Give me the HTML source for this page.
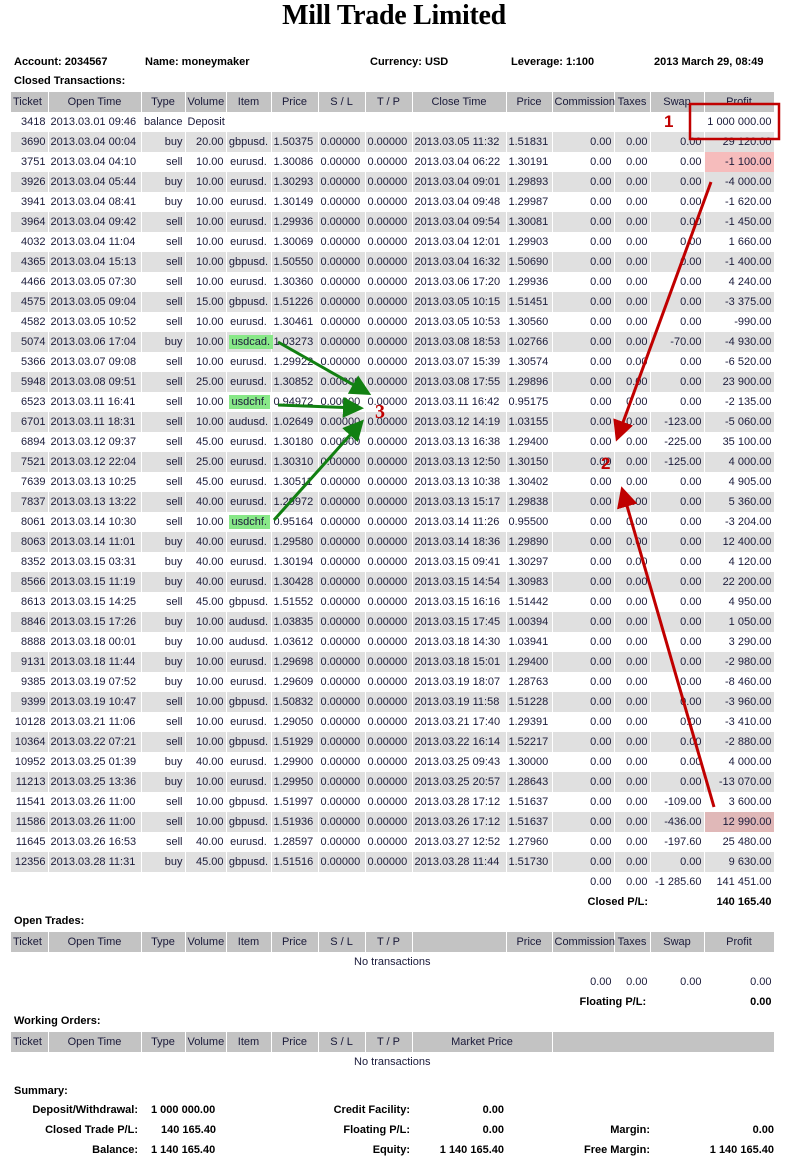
<!DOCTYPE html>
<html><head><meta charset="utf-8"><style>
body{margin:0;background:#fff;width:788px;height:1161px;position:relative;font-family:"Liberation Sans",sans-serif;font-size:11px;color:#1a1a3a;overflow:hidden}
.t{position:absolute;left:0;top:0;width:788px;text-align:center;font-family:"Liberation Serif",serif;font-weight:bold;font-size:28px;line-height:31px;color:#000;letter-spacing:-0.3px}
.a{position:absolute;font-weight:bold;font-size:11px;color:#000;white-space:nowrap}
table{position:absolute;left:11px;width:763px;table-layout:fixed;border-collapse:collapse}
td{height:20px;padding:0 2px;border-right:1px solid #fff;white-space:nowrap;overflow:visible;box-sizing:border-box;line-height:20px}
tr.h td{background:#c3c3c3;text-align:center;color:#1a1a3a}
tr.g td{background:#e0e0e0}
.m td:nth-child(1),.m td:nth-child(3),.m td:nth-child(4),.m td:nth-child(11),.m td:nth-child(12),.m td:nth-child(13),.m td:nth-child(14){text-align:right}
.m td:nth-child(5){text-align:center}
.gr{background:#88e888;padding:1px 3px}
.pk{background:#f6bcbc!important}
.pk2{background:#e0b8b8!important}
.r{text-align:right}.c{text-align:center}.b{font-weight:bold;color:#000}
</style></head><body>
<div class="t">Mill Trade Limited</div>
<div class="a" style="left:14px;top:56px">Account: 2034567</div>
<div class="a" style="left:145px;top:56px">Name: moneymaker</div>
<div class="a" style="left:370px;top:56px">Currency: USD</div>
<div class="a" style="left:511px;top:56px">Leverage: 1:100</div>
<div class="a" style="left:654px;top:56px">2013 March 29, 08:49</div>
<div class="a" style="left:14px;top:75px">Closed Transactions:</div>
<table class="m" style="top:92px">
<colgroup><col style="width:37px"><col style="width:93px"><col style="width:44px"><col style="width:41px"><col style="width:45px"><col style="width:47px"><col style="width:47px"><col style="width:47px"><col style="width:94px"><col style="width:46px"><col style="width:62px"><col style="width:36px"><col style="width:54px"><col style="width:70px"></colgroup>
<tr class="h"><td style="text-align:left">Ticket</td><td style="text-align:center">Open Time</td><td style="text-align:center">Type</td><td style="text-align:center">Volume</td><td>Item</td><td style="text-align:center">Price</td><td>S / L</td><td>T / P</td><td>Close Time</td><td>Price</td><td style="text-align:center">Commission</td><td style="text-align:center">Taxes</td><td style="text-align:center">Swap</td><td style="text-align:center">Profit</td></tr>
<tr><td>3418</td><td>2013.03.01 09:46</td><td>balance</td><td style="text-align:left">Deposit</td><td></td><td></td><td></td><td></td><td></td><td></td><td></td><td></td><td></td><td>1 000 000.00</td></tr>
<tr class="g"><td>3690</td><td>2013.03.04 00:04</td><td>buy</td><td>20.00</td><td>gbpusd.</td><td>1.50375</td><td>0.00000</td><td>0.00000</td><td>2013.03.05 11:32</td><td>1.51831</td><td>0.00</td><td>0.00</td><td>0.00</td><td>29 120.00</td></tr>
<tr><td>3751</td><td>2013.03.04 04:10</td><td>sell</td><td>10.00</td><td>eurusd.</td><td>1.30086</td><td>0.00000</td><td>0.00000</td><td>2013.03.04 06:22</td><td>1.30191</td><td>0.00</td><td>0.00</td><td>0.00</td><td class="pk">-1 100.00</td></tr>
<tr class="g"><td>3926</td><td>2013.03.04 05:44</td><td>buy</td><td>10.00</td><td>eurusd.</td><td>1.30293</td><td>0.00000</td><td>0.00000</td><td>2013.03.04 09:01</td><td>1.29893</td><td>0.00</td><td>0.00</td><td>0.00</td><td>-4 000.00</td></tr>
<tr><td>3941</td><td>2013.03.04 08:41</td><td>buy</td><td>10.00</td><td>eurusd.</td><td>1.30149</td><td>0.00000</td><td>0.00000</td><td>2013.03.04 09:48</td><td>1.29987</td><td>0.00</td><td>0.00</td><td>0.00</td><td>-1 620.00</td></tr>
<tr class="g"><td>3964</td><td>2013.03.04 09:42</td><td>sell</td><td>10.00</td><td>eurusd.</td><td>1.29936</td><td>0.00000</td><td>0.00000</td><td>2013.03.04 09:54</td><td>1.30081</td><td>0.00</td><td>0.00</td><td>0.00</td><td>-1 450.00</td></tr>
<tr><td>4032</td><td>2013.03.04 11:04</td><td>sell</td><td>10.00</td><td>eurusd.</td><td>1.30069</td><td>0.00000</td><td>0.00000</td><td>2013.03.04 12:01</td><td>1.29903</td><td>0.00</td><td>0.00</td><td>0.00</td><td>1 660.00</td></tr>
<tr class="g"><td>4365</td><td>2013.03.04 15:13</td><td>sell</td><td>10.00</td><td>gbpusd.</td><td>1.50550</td><td>0.00000</td><td>0.00000</td><td>2013.03.04 16:32</td><td>1.50690</td><td>0.00</td><td>0.00</td><td>0.00</td><td>-1 400.00</td></tr>
<tr><td>4466</td><td>2013.03.05 07:30</td><td>sell</td><td>10.00</td><td>eurusd.</td><td>1.30360</td><td>0.00000</td><td>0.00000</td><td>2013.03.06 17:20</td><td>1.29936</td><td>0.00</td><td>0.00</td><td>0.00</td><td>4 240.00</td></tr>
<tr class="g"><td>4575</td><td>2013.03.05 09:04</td><td>sell</td><td>15.00</td><td>gbpusd.</td><td>1.51226</td><td>0.00000</td><td>0.00000</td><td>2013.03.05 10:15</td><td>1.51451</td><td>0.00</td><td>0.00</td><td>0.00</td><td>-3 375.00</td></tr>
<tr><td>4582</td><td>2013.03.05 10:52</td><td>sell</td><td>10.00</td><td>eurusd.</td><td>1.30461</td><td>0.00000</td><td>0.00000</td><td>2013.03.05 10:53</td><td>1.30560</td><td>0.00</td><td>0.00</td><td>0.00</td><td>-990.00</td></tr>
<tr class="g"><td>5074</td><td>2013.03.06 17:04</td><td>buy</td><td>10.00</td><td><span class="gr">usdcad.</span></td><td>1.03273</td><td>0.00000</td><td>0.00000</td><td>2013.03.08 18:53</td><td>1.02766</td><td>0.00</td><td>0.00</td><td>-70.00</td><td>-4 930.00</td></tr>
<tr><td>5366</td><td>2013.03.07 09:08</td><td>sell</td><td>10.00</td><td>eurusd.</td><td>1.29922</td><td>0.00000</td><td>0.00000</td><td>2013.03.07 15:39</td><td>1.30574</td><td>0.00</td><td>0.00</td><td>0.00</td><td>-6 520.00</td></tr>
<tr class="g"><td>5948</td><td>2013.03.08 09:51</td><td>sell</td><td>25.00</td><td>eurusd.</td><td>1.30852</td><td>0.00000</td><td>0.00000</td><td>2013.03.08 17:55</td><td>1.29896</td><td>0.00</td><td>0.00</td><td>0.00</td><td>23 900.00</td></tr>
<tr><td>6523</td><td>2013.03.11 16:41</td><td>sell</td><td>10.00</td><td><span class="gr">usdchf.</span></td><td>0.94972</td><td>0.00000</td><td>0.00000</td><td>2013.03.11 16:42</td><td>0.95175</td><td>0.00</td><td>0.00</td><td>0.00</td><td>-2 135.00</td></tr>
<tr class="g"><td>6701</td><td>2013.03.11 18:31</td><td>sell</td><td>10.00</td><td>audusd.</td><td>1.02649</td><td>0.00000</td><td>0.00000</td><td>2013.03.12 14:19</td><td>1.03155</td><td>0.00</td><td>0.00</td><td>-123.00</td><td>-5 060.00</td></tr>
<tr><td>6894</td><td>2013.03.12 09:37</td><td>sell</td><td>45.00</td><td>eurusd.</td><td>1.30180</td><td>0.00000</td><td>0.00000</td><td>2013.03.13 16:38</td><td>1.29400</td><td>0.00</td><td>0.00</td><td>-225.00</td><td>35 100.00</td></tr>
<tr class="g"><td>7521</td><td>2013.03.12 22:04</td><td>sell</td><td>25.00</td><td>eurusd.</td><td>1.30310</td><td>0.00000</td><td>0.00000</td><td>2013.03.13 12:50</td><td>1.30150</td><td>0.00</td><td>0.00</td><td>-125.00</td><td>4 000.00</td></tr>
<tr><td>7639</td><td>2013.03.13 10:25</td><td>sell</td><td>45.00</td><td>eurusd.</td><td>1.30511</td><td>0.00000</td><td>0.00000</td><td>2013.03.13 10:38</td><td>1.30402</td><td>0.00</td><td>0.00</td><td>0.00</td><td>4 905.00</td></tr>
<tr class="g"><td>7837</td><td>2013.03.13 13:22</td><td>sell</td><td>40.00</td><td>eurusd.</td><td>1.29972</td><td>0.00000</td><td>0.00000</td><td>2013.03.13 15:17</td><td>1.29838</td><td>0.00</td><td>0.00</td><td>0.00</td><td>5 360.00</td></tr>
<tr><td>8061</td><td>2013.03.14 10:30</td><td>sell</td><td>10.00</td><td><span class="gr">usdchf.</span></td><td>0.95164</td><td>0.00000</td><td>0.00000</td><td>2013.03.14 11:26</td><td>0.95500</td><td>0.00</td><td>0.00</td><td>0.00</td><td>-3 204.00</td></tr>
<tr class="g"><td>8063</td><td>2013.03.14 11:01</td><td>buy</td><td>40.00</td><td>eurusd.</td><td>1.29580</td><td>0.00000</td><td>0.00000</td><td>2013.03.14 18:36</td><td>1.29890</td><td>0.00</td><td>0.00</td><td>0.00</td><td>12 400.00</td></tr>
<tr><td>8352</td><td>2013.03.15 03:31</td><td>buy</td><td>40.00</td><td>eurusd.</td><td>1.30194</td><td>0.00000</td><td>0.00000</td><td>2013.03.15 09:41</td><td>1.30297</td><td>0.00</td><td>0.00</td><td>0.00</td><td>4 120.00</td></tr>
<tr class="g"><td>8566</td><td>2013.03.15 11:19</td><td>buy</td><td>40.00</td><td>eurusd.</td><td>1.30428</td><td>0.00000</td><td>0.00000</td><td>2013.03.15 14:54</td><td>1.30983</td><td>0.00</td><td>0.00</td><td>0.00</td><td>22 200.00</td></tr>
<tr><td>8613</td><td>2013.03.15 14:25</td><td>sell</td><td>45.00</td><td>gbpusd.</td><td>1.51552</td><td>0.00000</td><td>0.00000</td><td>2013.03.15 16:16</td><td>1.51442</td><td>0.00</td><td>0.00</td><td>0.00</td><td>4 950.00</td></tr>
<tr class="g"><td>8846</td><td>2013.03.15 17:26</td><td>buy</td><td>10.00</td><td>audusd.</td><td>1.03835</td><td>0.00000</td><td>0.00000</td><td>2013.03.15 17:45</td><td>1.00394</td><td>0.00</td><td>0.00</td><td>0.00</td><td>1 050.00</td></tr>
<tr><td>8888</td><td>2013.03.18 00:01</td><td>buy</td><td>10.00</td><td>audusd.</td><td>1.03612</td><td>0.00000</td><td>0.00000</td><td>2013.03.18 14:30</td><td>1.03941</td><td>0.00</td><td>0.00</td><td>0.00</td><td>3 290.00</td></tr>
<tr class="g"><td>9131</td><td>2013.03.18 11:44</td><td>buy</td><td>10.00</td><td>eurusd.</td><td>1.29698</td><td>0.00000</td><td>0.00000</td><td>2013.03.18 15:01</td><td>1.29400</td><td>0.00</td><td>0.00</td><td>0.00</td><td>-2 980.00</td></tr>
<tr><td>9385</td><td>2013.03.19 07:52</td><td>buy</td><td>10.00</td><td>eurusd.</td><td>1.29609</td><td>0.00000</td><td>0.00000</td><td>2013.03.19 18:07</td><td>1.28763</td><td>0.00</td><td>0.00</td><td>0.00</td><td>-8 460.00</td></tr>
<tr class="g"><td>9399</td><td>2013.03.19 10:47</td><td>sell</td><td>10.00</td><td>gbpusd.</td><td>1.50832</td><td>0.00000</td><td>0.00000</td><td>2013.03.19 11:58</td><td>1.51228</td><td>0.00</td><td>0.00</td><td>0.00</td><td>-3 960.00</td></tr>
<tr><td>10128</td><td>2013.03.21 11:06</td><td>sell</td><td>10.00</td><td>eurusd.</td><td>1.29050</td><td>0.00000</td><td>0.00000</td><td>2013.03.21 17:40</td><td>1.29391</td><td>0.00</td><td>0.00</td><td>0.00</td><td>-3 410.00</td></tr>
<tr class="g"><td>10364</td><td>2013.03.22 07:21</td><td>sell</td><td>10.00</td><td>gbpusd.</td><td>1.51929</td><td>0.00000</td><td>0.00000</td><td>2013.03.22 16:14</td><td>1.52217</td><td>0.00</td><td>0.00</td><td>0.00</td><td>-2 880.00</td></tr>
<tr><td>10952</td><td>2013.03.25 01:39</td><td>buy</td><td>40.00</td><td>eurusd.</td><td>1.29900</td><td>0.00000</td><td>0.00000</td><td>2013.03.25 09:43</td><td>1.30000</td><td>0.00</td><td>0.00</td><td>0.00</td><td>4 000.00</td></tr>
<tr class="g"><td>11213</td><td>2013.03.25 13:36</td><td>buy</td><td>10.00</td><td>eurusd.</td><td>1.29950</td><td>0.00000</td><td>0.00000</td><td>2013.03.25 20:57</td><td>1.28643</td><td>0.00</td><td>0.00</td><td>0.00</td><td>-13 070.00</td></tr>
<tr><td>11541</td><td>2013.03.26 11:00</td><td>sell</td><td>10.00</td><td>gbpusd.</td><td>1.51997</td><td>0.00000</td><td>0.00000</td><td>2013.03.28 17:12</td><td>1.51637</td><td>0.00</td><td>0.00</td><td>-109.00</td><td>3 600.00</td></tr>
<tr class="g"><td>11586</td><td>2013.03.26 11:00</td><td>sell</td><td>10.00</td><td>gbpusd.</td><td>1.51936</td><td>0.00000</td><td>0.00000</td><td>2013.03.26 17:12</td><td>1.51637</td><td>0.00</td><td>0.00</td><td>-436.00</td><td class="pk2">12 990.00</td></tr>
<tr><td>11645</td><td>2013.03.26 16:53</td><td>sell</td><td>40.00</td><td>eurusd.</td><td>1.28597</td><td>0.00000</td><td>0.00000</td><td>2013.03.27 12:52</td><td>1.27960</td><td>0.00</td><td>0.00</td><td>-197.60</td><td>25 480.00</td></tr>
<tr class="g"><td>12356</td><td>2013.03.28 11:31</td><td>buy</td><td>45.00</td><td>gbpusd.</td><td>1.51516</td><td>0.00000</td><td>0.00000</td><td>2013.03.28 11:44</td><td>1.51730</td><td>0.00</td><td>0.00</td><td>0.00</td><td>9 630.00</td></tr>
<tr><td></td><td></td><td></td><td></td><td></td><td></td><td></td><td></td><td></td><td></td><td>0.00</td><td>0.00</td><td>-1 285.60</td><td>141 451.00</td></tr>
<tr><td></td><td></td><td></td><td></td><td></td><td></td><td></td><td></td><td></td><td></td><td colspan="3" class="b" style="text-align:left;padding-left:35px">Closed P/L:</td><td class="b">140 165.40</td></tr>
</table>

<div class="a" style="left:14px;top:915px">Open Trades:</div>
<table class="m" style="top:932px">
<colgroup><col style="width:37px"><col style="width:93px"><col style="width:44px"><col style="width:41px"><col style="width:45px"><col style="width:47px"><col style="width:47px"><col style="width:47px"><col style="width:94px"><col style="width:46px"><col style="width:62px"><col style="width:36px"><col style="width:54px"><col style="width:70px"></colgroup>
<tr class="h"><td style="text-align:left">Ticket</td><td style="text-align:center">Open Time</td><td style="text-align:center">Type</td><td style="text-align:center">Volume</td><td>Item</td><td style="text-align:center">Price</td><td>S / L</td><td>T / P</td><td></td><td>Price</td><td style="text-align:center">Commission</td><td style="text-align:center">Taxes</td><td style="text-align:center">Swap</td><td style="text-align:center">Profit</td></tr>
<tr><td colspan="14" style="text-align:center">No transactions</td></tr>
<tr><td></td><td></td><td></td><td></td><td></td><td></td><td></td><td></td><td></td><td></td><td>0.00</td><td>0.00</td><td>0.00</td><td>0.00</td></tr>
<tr><td></td><td></td><td></td><td></td><td></td><td></td><td></td><td></td><td></td><td></td><td colspan="3" class="b" style="text-align:left;padding-left:27px">Floating P/L:</td><td class="b">0.00</td></tr>
</table>

<div class="a" style="left:14px;top:1015px">Working Orders:</div>
<table style="top:1032px">
<colgroup><col style="width:37px"><col style="width:93px"><col style="width:44px"><col style="width:41px"><col style="width:45px"><col style="width:47px"><col style="width:47px"><col style="width:47px"><col style="width:94px"><col style="width:46px"><col style="width:62px"><col style="width:36px"><col style="width:54px"><col style="width:70px"></colgroup>
<tr class="h"><td style="text-align:left">Ticket</td><td>Open Time</td><td>Type</td><td>Volume</td><td>Item</td><td>Price</td><td>S / L</td><td>T / P</td><td colspan="2">Market Price</td><td colspan="4"></td></tr>
<tr><td colspan="14" style="text-align:center">No transactions</td></tr>
</table>

<div class="a" style="left:14px;top:1085px">Summary:</div>
<div class="a" style="right:650px;top:1104px">Deposit/Withdrawal:</div>
<div class="a" style="left:151px;top:1104px">1 000 000.00</div>
<div class="a" style="right:650px;top:1124px">Closed Trade P/L:</div>
<div class="a" style="left:161px;top:1124px">140 165.40</div>
<div class="a" style="right:650px;top:1144px">Balance:</div>
<div class="a" style="left:151px;top:1144px">1 140 165.40</div>
<div class="a" style="right:378px;top:1104px">Credit Facility:</div>
<div class="a" style="right:284px;top:1104px">0.00</div>
<div class="a" style="right:378px;top:1124px">Floating P/L:</div>
<div class="a" style="right:284px;top:1124px">0.00</div>
<div class="a" style="right:378px;top:1144px">Equity:</div>
<div class="a" style="right:284px;top:1144px">1 140 165.40</div>
<div class="a" style="right:138px;top:1124px">Margin:</div>
<div class="a" style="right:14px;top:1124px">0.00</div>
<div class="a" style="right:138px;top:1144px">Free Margin:</div>
<div class="a" style="right:14px;top:1144px">1 140 165.40</div>

<svg style="position:absolute;left:0;top:0" width="788" height="1161">
<defs>
<marker id="rh" markerWidth="7" markerHeight="7" refX="5" refY="3.5" orient="auto" markerUnits="strokeWidth"><path d="M0,0 L7,3.5 L0,7 Z" fill="#c00000"/></marker>
<marker id="gh" markerWidth="7" markerHeight="7" refX="5" refY="3.5" orient="auto" markerUnits="strokeWidth"><path d="M0,0 L7,3.5 L0,7 Z" fill="#128012"/></marker>
</defs>
<rect x="690" y="104" width="89" height="35" fill="none" stroke="#c00000" stroke-width="2.5"/>
<line x1="711" y1="182" x2="618" y2="436" stroke="#c00000" stroke-width="3" marker-end="url(#rh)"/>
<line x1="714" y1="807" x2="623" y2="492" stroke="#c00000" stroke-width="3" marker-end="url(#rh)"/>
<line x1="278" y1="342" x2="366" y2="392" stroke="#128012" stroke-width="3" marker-end="url(#gh)"/>
<line x1="278" y1="405" x2="358" y2="408" stroke="#128012" stroke-width="3" marker-end="url(#gh)"/>
<line x1="274" y1="520" x2="360" y2="424" stroke="#128012" stroke-width="3" marker-end="url(#gh)"/>
<text x="664" y="127" font-family="Liberation Sans,sans-serif" font-weight="bold" font-size="17" fill="#c00000">1</text>
<text x="601" y="469" font-family="Liberation Sans,sans-serif" font-weight="bold" font-size="17" fill="#c00000">2</text>
<text x="375" y="418" font-family="Liberation Serif,serif" font-weight="bold" font-size="20" fill="#c00000">3</text>
</svg>
</body></html>
